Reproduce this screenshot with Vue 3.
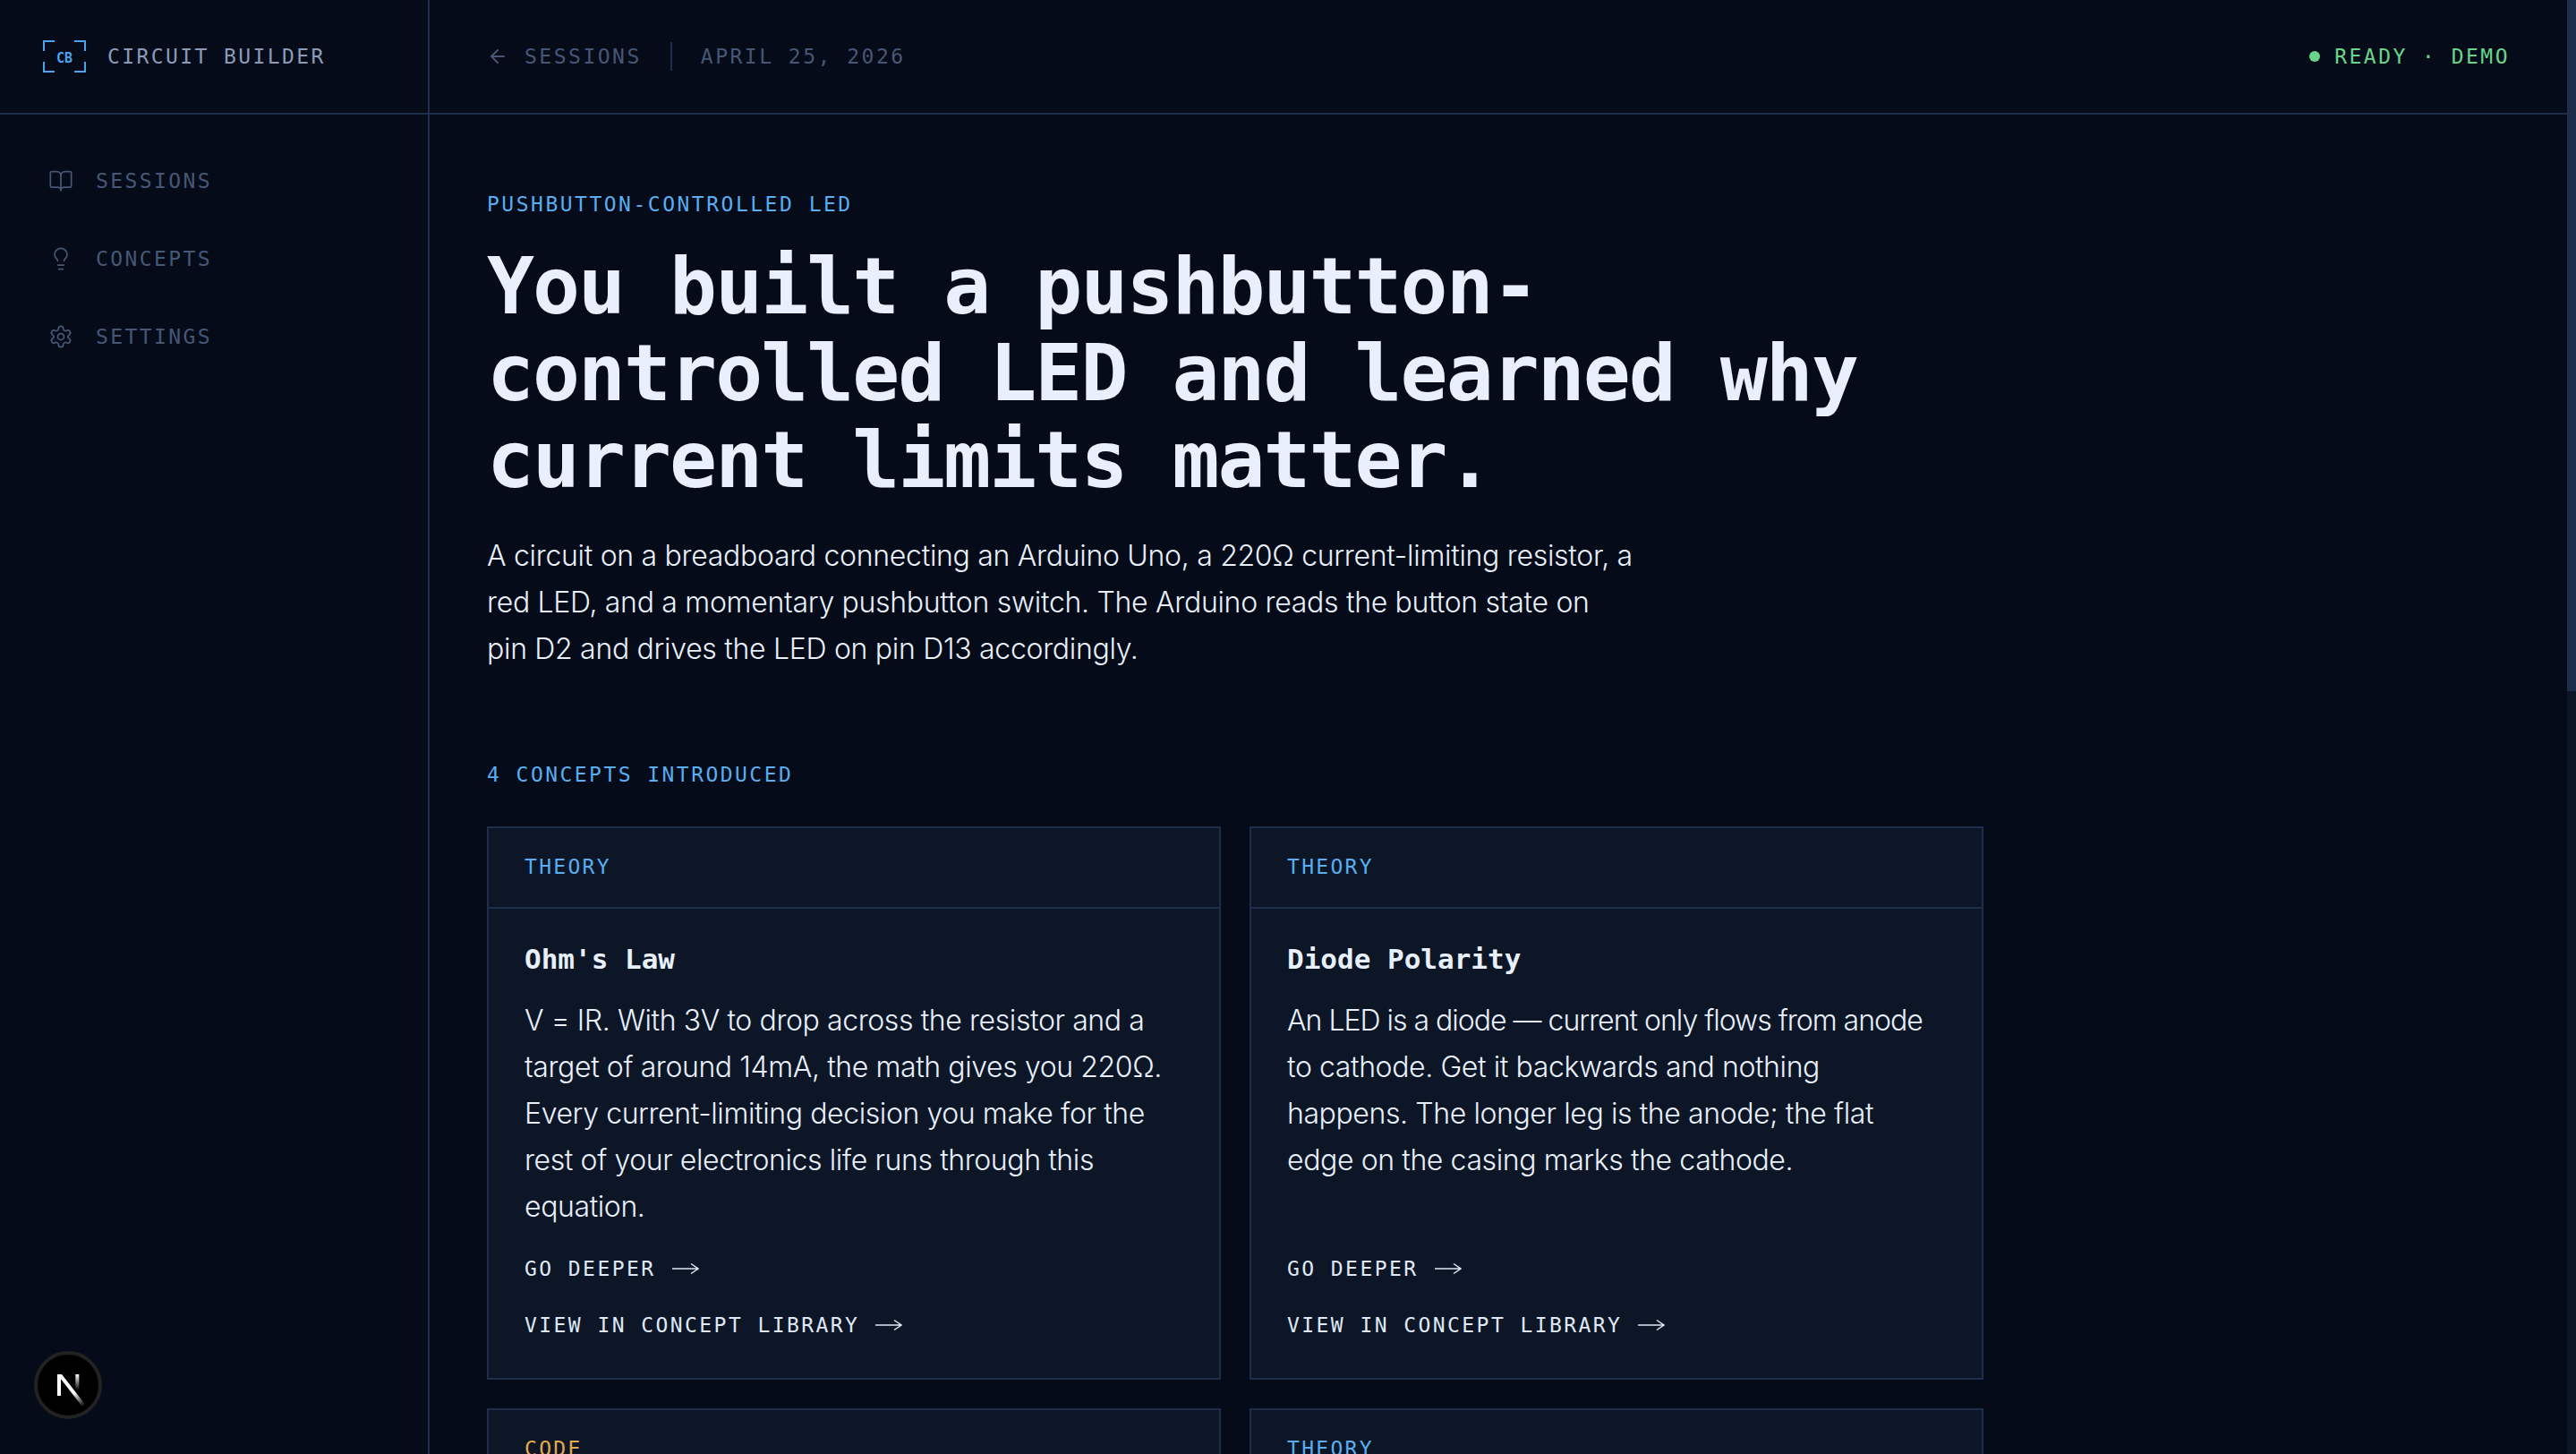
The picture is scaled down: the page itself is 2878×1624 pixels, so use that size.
<template>
  <div class="page">
    <div class="shell">
      <header class="topbar">
        <div class="brand">
          <span class="logo">
            <svg class="logo-frame" viewBox="0 0 48 36" fill="none" stroke="#4ea4ec" stroke-width="2">
              <path d="M1 12V1H13M35 1H47V12M1 24V35H13M35 35H47V24" />
            </svg>
            <span class="logo-text">CB</span>
          </span>
          <span class="brand-name">CIRCUIT BUILDER</span>
        </div>
        <div class="crumbs">
          <svg class="back" viewBox="0 0 24 24" fill="none" stroke="currentColor" stroke-width="2" stroke-linecap="round" stroke-linejoin="round">
            <path d="m12 19-7-7 7-7" />
            <path d="M19 12H5" />
          </svg>
          <span>SESSIONS</span>
          <i class="crumb-line"></i>
          <span>APRIL 25, 2026</span>
        </div>
        <div class="status"><i class="status-dot"></i>READY · DEMO</div>
      </header>

      <div class="body">
        <aside class="sidebar">
          <a v-for="item in navItems" :key="item.label" class="nav-item">
            <svg viewBox="0 0 24 24" fill="none" stroke="currentColor" stroke-width="1.5" stroke-linecap="round" stroke-linejoin="round">
              <path v-for="d in item.paths" :key="d" :d="d" />
              <circle v-if="item.circle" cx="12" cy="12" r="3" />
            </svg>
            <span>{{ item.label }}</span>
          </a>
        </aside>

        <main class="content">
          <p class="eyebrow">PUSHBUTTON-CONTROLLED LED</p>
          <h1 class="headline">You built a pushbutton-<br />controlled LED and learned why<br />current limits matter.</h1>
          <p class="lede">
            A circuit on a breadboard connecting an Arduino Uno, a 220Ω current-limiting resistor, a<br />
            red LED, and a momentary pushbutton switch. The Arduino reads the button state on<br />
            pin D2 and drives the LED on pin D13 accordingly.
          </p>

          <h2 class="section-label">4 CONCEPTS INTRODUCED</h2>

          <div class="cards">
            <article v-for="(card, idx) in cards" :key="idx" class="card">
              <div class="card-head" :class="card.kind">{{ card.tag }}</div>
              <div v-if="card.title" class="card-body">
                <h3 class="card-title">{{ card.title }}</h3>
                <p class="card-text">
                  <span v-for="(line, i) in card.lines" :key="i" class="card-line" :class="{ tight: line.includes('—') }">{{ line }}</span>
                </p>
                <div class="card-links">
                  <a v-for="label in linkLabels" :key="label" class="card-link">
                    {{ label }}
                    <svg class="arrow" viewBox="0 0 30 14" fill="none" stroke="currentColor" stroke-width="1.5">
                      <path d="M0 7H29M21 1.5 29 7 21 12.5" />
                    </svg>
                  </a>
                </div>
              </div>
            </article>
          </div>
        </main>
      </div>
    </div>

    <div class="scrollbar"><div class="scroll-thumb"></div></div>

    <div class="dev-badge">
      <svg viewBox="0 0 180 180" width="60" height="60" fill="none">
        <defs>
          <linearGradient id="n-a" x1="109" y1="116" x2="144" y2="160" gradientUnits="userSpaceOnUse">
            <stop offset="0" stop-color="#fff" />
            <stop offset="1" stop-color="#fff" stop-opacity="0" />
          </linearGradient>
          <linearGradient id="n-b" x1="121" y1="54" x2="120" y2="107" gradientUnits="userSpaceOnUse">
            <stop offset="0" stop-color="#fff" />
            <stop offset="1" stop-color="#fff" stop-opacity="0" />
          </linearGradient>
        </defs>
        <path d="M149.5 157.5 69.1 54H54v72h12.1V69.4l73.8 95.3c3.3-2.2 6.5-4.6 9.6-7.2Z" fill="url(#n-a)" />
        <rect x="115" y="54" width="12" height="72" fill="url(#n-b)" />
      </svg>
    </div>
  </div>
</template>

<script setup>
const navItems = [
  {
    label: 'SESSIONS',
    paths: [
      'M12 7v14',
      'M3 18a1 1 0 0 1-1-1V4a1 1 0 0 1 1-1h5a4 4 0 0 1 4 4 4 4 0 0 1 4-4h5a1 1 0 0 1 1 1v13a1 1 0 0 1-1 1h-6a3 3 0 0 0-3 3 3 3 0 0 0-3-3z',
    ],
  },
  {
    label: 'CONCEPTS',
    paths: [
      'M15 14c.2-1 .7-1.7 1.5-2.5 1-.9 1.5-2.2 1.5-3.5A6 6 0 0 0 6 8c0 1 .2 2.2 1.5 3.5.7.7 1.3 1.5 1.5 2.5',
      'M9 18h6',
      'M10 22h4',
    ],
  },
  {
    label: 'SETTINGS',
    circle: true,
    paths: [
      'M12.22 2h-.44a2 2 0 0 0-2 2v.18a2 2 0 0 1-1 1.73l-.43.25a2 2 0 0 1-2 0l-.15-.08a2 2 0 0 0-2.73.73l-.22.38a2 2 0 0 0 .73 2.73l.15.1a2 2 0 0 1 1 1.72v.51a2 2 0 0 1-1 1.74l-.15.09a2 2 0 0 0-.73 2.73l.22.38a2 2 0 0 0 2.73.73l.15-.08a2 2 0 0 1 2 0l.43.25a2 2 0 0 1 1 1.73V20a2 2 0 0 0 2 2h.44a2 2 0 0 0 2-2v-.18a2 2 0 0 1 1-1.73l.43-.25a2 2 0 0 1 2 0l.15.08a2 2 0 0 0 2.73-.73l.22-.39a2 2 0 0 0-.73-2.73l-.15-.08a2 2 0 0 1-1-1.74v-.5a2 2 0 0 1 1-1.74l.15-.09a2 2 0 0 0 .73-2.73l-.22-.38a2 2 0 0 0-2.73-.73l-.15.08a2 2 0 0 1-2 0l-.43-.25a2 2 0 0 1-1-1.73V4a2 2 0 0 0-2-2z',
    ],
  },
]

const linkLabels = ['GO DEEPER', 'VIEW IN CONCEPT LIBRARY']

const cards = [
  {
    kind: 'theory',
    tag: 'THEORY',
    title: "Ohm's Law",
    lines: [
      'V = IR. With 3V to drop across the resistor and a',
      'target of around 14mA, the math gives you 220Ω.',
      'Every current-limiting decision you make for the',
      'rest of your electronics life runs through this',
      'equation.',
    ],
  },
  {
    kind: 'theory',
    tag: 'THEORY',
    title: 'Diode Polarity',
    lines: [
      'An LED is a diode — current only flows from anode',
      'to cathode. Get it backwards and nothing',
      'happens. The longer leg is the anode; the flat',
      'edge on the casing marks the cathode.',
    ],
  },
  { kind: 'code', tag: 'CODE' },
  { kind: 'theory', tag: 'THEORY' },
]
</script>

<style>
html,
body {
  margin: 0;
  height: 100%;
  overflow: hidden;
  background: #050b18;
}
</style>

<style scoped>
.page {
  display: flex;
  height: 1624px;
  overflow: hidden;
  background: #050b18;
  font-family: "Inter", sans-serif;
}

.shell {
  flex: 1;
  min-width: 0;
}

.topbar {
  display: flex;
  align-items: center;
  height: 126px;
  border-bottom: 2px solid #1e2d4a;
  font-family: "DejaVu Sans Mono", monospace;
}

.brand {
  display: flex;
  align-items: center;
  gap: 24px;
  box-sizing: border-box;
  width: 480px;
  height: 100%;
  padding-left: 48px;
  border-right: 2px solid #1e2d4a;
}

.logo {
  position: relative;
  display: flex;
  align-items: center;
  justify-content: center;
  width: 48px;
  height: 36px;
}

.logo-frame {
  position: absolute;
  inset: 0;
}

.logo-text {
  padding-top: 4px;
  font-size: 15px;
  font-weight: 700;
  color: #4ea4ec;
}

.brand-name {
  font-size: 23px;
  letter-spacing: 2.4px;
  color: #8a9bb8;
}

.crumbs {
  display: flex;
  align-items: center;
  gap: 18px;
  padding-left: 64px;
  font-size: 23px;
  letter-spacing: 2.5px;
  color: #465775;
}

.back {
  width: 24px;
  height: 24px;
}

.crumb-line {
  width: 2px;
  height: 32px;
  margin: 0 14px;
  background: #1e2d4a;
}

.status {
  display: flex;
  align-items: center;
  gap: 16px;
  margin-left: auto;
  padding-right: 64px;
  font-size: 23px;
  letter-spacing: 2.47px;
  color: #68d58a;
}

.status-dot {
  width: 12px;
  height: 12px;
  border-radius: 50%;
  background: #68d58a;
}

.body {
  display: flex;
  height: 1496px;
}

.sidebar {
  display: flex;
  flex-direction: column;
  gap: 51px;
  box-sizing: border-box;
  width: 480px;
  padding: 56px 0 0 54px;
  border-right: 2px solid #1e2d4a;
}

.nav-item {
  display: flex;
  align-items: center;
  gap: 25px;
  height: 36px;
  font-family: "DejaVu Sans Mono", monospace;
  font-size: 23px;
  letter-spacing: 2.4px;
  color: #465775;
}

.nav-item svg {
  width: 28px;
  height: 28px;
}

.content {
  flex: 1;
  min-width: 0;
  padding: 86px 64px 0;
}

.eyebrow {
  margin: 0 0 30px;
  font-family: "DejaVu Sans Mono", monospace;
  font-size: 23px;
  line-height: 28px;
  letter-spacing: 2.5px;
  color: #58aef0;
}

.headline {
  margin: 0 0 33px;
  font-family: "DejaVu Sans Mono", monospace;
  font-size: 88px;
  font-weight: 700;
  line-height: 96.8px;
  letter-spacing: -1.95px;
  color: #e8f0fb;
}

.lede {
  margin: 0 0 99.5px;
  font-size: 32px;
  font-weight: 300;
  line-height: 52px;
  letter-spacing: -0.3px;
  color: #e8f0fb;
}

.section-label {
  margin: 0 0 44px;
  font-family: "DejaVu Sans Mono", monospace;
  font-size: 23px;
  font-weight: 400;
  line-height: 28px;
  letter-spacing: 2.45px;
  color: #58aef0;
}

.cards {
  display: grid;
  grid-template-columns: 820px 820px;
  gap: 32px;
}

.card {
  border: 2px solid #1e2d4a;
  background: #0d1626;
}

.card-head {
  height: 90px;
  box-sizing: border-box;
  padding: 29px 40px 0;
  border-bottom: 2px solid #1e2d4a;
  font-family: "DejaVu Sans Mono", monospace;
  font-size: 23px;
  line-height: 28px;
  letter-spacing: 2.3px;
}

.card-head.theory {
  color: #58aef0;
}

.card-head.code {
  color: #e5a94e;
}

.card-body {
  display: flex;
  flex-direction: column;
  height: 524px;
  box-sizing: border-box;
  padding: 36px 40px 45px;
}

.card-title {
  margin: 0 0 23px;
  font-family: "DejaVu Sans Mono", monospace;
  font-size: 31px;
  font-weight: 700;
  line-height: 40px;
  color: #e8f0fb;
}

.card-text {
  margin: 0;
  font-size: 32px;
  font-weight: 300;
  line-height: 52px;
  letter-spacing: -0.4px;
  color: #e8f0fb;
}

.card-line {
  display: block;
  white-space: nowrap;
}

.card-line.tight {
  letter-spacing: -1px;
}

.card-links {
  display: flex;
  flex-direction: column;
  gap: 35px;
  margin-top: auto;
}

.card-link {
  display: flex;
  align-items: center;
  gap: 18px;
  font-family: "DejaVu Sans Mono", monospace;
  font-size: 23px;
  line-height: 28px;
  letter-spacing: 2.43px;
  color: #dfe8f5;
}

.arrow {
  width: 30px;
  height: 14px;
}

.scrollbar {
  flex: none;
  width: 10px;
  background: #0d1626;
}

.scroll-thumb {
  height: 772px;
  background: #1e2d4a;
}

/* dev indicator floating over the sidebar */
.dev-badge {
  position: fixed;
  left: 38px;
  top: 1509px;
  display: flex;
  align-items: center;
  justify-content: center;
  box-sizing: border-box;
  width: 76px;
  height: 76px;
  border: 4px solid #222;
  border-radius: 50%;
  background: #000;
}
</style>
